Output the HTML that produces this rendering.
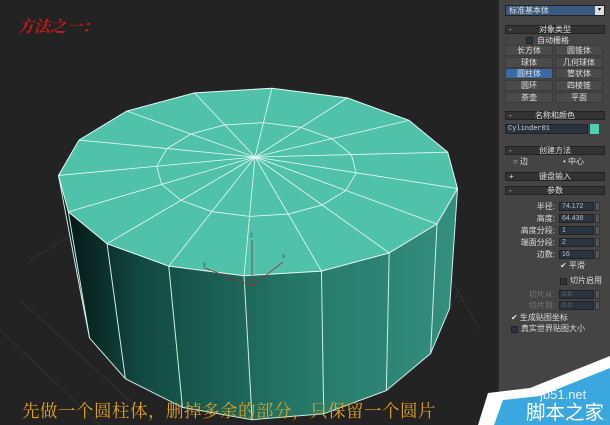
<!DOCTYPE html>
<html><head><meta charset="utf-8">
<style>
*{margin:0;padding:0;box-sizing:border-box}
body{width:610px;height:425px;overflow:hidden;background:#232323;position:relative;font-family:"Liberation Sans","Noto Sans CJK SC",sans-serif}
#vp{position:absolute;left:0;top:0}
.t{position:absolute;white-space:nowrap}
#panel{position:absolute;left:497px;top:0;width:113px;height:425px;background:#444;border-left:2px solid #2a2a2a}
.p{position:absolute;font-size:8px;color:#ddd;white-space:nowrap;line-height:10px}
.hd{position:absolute;left:6px;width:100px;height:9px;background:#333;border:1px solid #222;font-size:8px;color:#ddd;text-align:center;line-height:8px}
.hd i{position:absolute;left:3px;font-style:normal}
.b{position:absolute;height:11px;width:48px;background:#4a4a4a;border:1px solid #3a3a3a;font-size:8px;color:#ddd;text-align:center;line-height:9px}
.in{position:absolute;left:60px;width:35px;height:9px;background:#2a3440;border:1px solid #222;font-size:7px;color:#bbb;line-height:7px;padding-left:2px}
.sp{position:absolute;left:96px;width:5px;height:9px;background:#555;border:1px solid #333}
.lb{position:absolute;font-size:8px;color:#ddd;text-align:right;width:56px;left:0}
.cb{position:absolute;width:7px;height:7px;background:#2a3440;border:1px solid #222}
.wm{z-index:5}
</style></head><body>
<svg id="vp" width="497" height="425" viewBox="0 0 497 425">
<defs>
<linearGradient id="sg" x1="60" x2="460" y1="0" y2="0" gradientUnits="userSpaceOnUse">
<stop offset="0" stop-color="#031412"/><stop offset="0.2" stop-color="#124840"/><stop offset="0.6" stop-color="#257868"/><stop offset="1" stop-color="#35907f"/></linearGradient>
</defs>
<g stroke="#3a3a3a" stroke-width="0.7" fill="none">
<line x1="20" y1="300" x2="140" y2="410"/><line x1="0" y1="330" x2="100" y2="425"/>
<line x1="440" y1="260" x2="480" y2="330"/><line x1="460" y1="290" x2="420" y2="360"/>
<line x1="30" y1="260" x2="80" y2="230"/>
</g>
<g id="cyl"></g>
<g stroke="#8a3a3a" stroke-width="0.8" fill="none"><line x1="252" y1="286" x2="252" y2="240"/><line x1="252" y1="286" x2="205" y2="268"/><line x1="252" y1="286" x2="283" y2="262"/></g>
<text x="203" y="266" font-size="6" fill="#444">y</text><text x="282" y="258" font-size="6" fill="#444">x</text><text x="250" y="237" font-size="6" fill="#444">z</text>
</svg>
<script>
(function(){
var g=document.getElementById('cyl'),ns='http://www.w3.org/2000/svg';
var N=16,cx=258,cy=182,rx=200,ry=94,bcx=265,bcy=300,brx=185,bry=120,C=[255,157];
var T=[],B=[];
for(var k=0;k<N;k++){var a=(k*22.5+4)*Math.PI/180;T.push([cx+rx*Math.cos(a),cy+ry*Math.sin(a)]);B.push([bcx+brx*Math.cos(a),bcy+bry*Math.sin(a)]);}
function el(n,at){var e=document.createElementNS(ns,n);for(var k in at)e.setAttribute(k,at[k]);g.appendChild(e);return e;}
var front=[];for(var k=0;k<=8;k++)front.push(k);
var bp=[];for(var k=8;k>=0;k--)bp.push(B[k].join(','));
el('polygon',{points:front.map(function(k){return T[k].join(',')}).concat(bp).join(' '),fill:'url(#sg)'});
for(var k=0;k<=8;k++)el('line',{x1:T[k][0],y1:T[k][1],x2:B[k][0],y2:B[k][1],stroke:'#cfeee6','stroke-width':1});
var bl=[];for(var k=0;k<=8;k++)bl.push(B[k].join(','));
el('polyline',{points:bl.join(' '),fill:'none',stroke:'#cfeee6','stroke-width':1});
el('polygon',{points:T.map(function(p){return p.join(',')}).join(' '),fill:'#50c2aa',stroke:'#e6fbf5','stroke-width':1});
var inn=[];for(var k=0;k<N;k++){var p=T[k];inn.push([C[0]+(p[0]-C[0])*0.5,C[1]+(p[1]-C[1])*0.5].join(','));
el('line',{x1:C[0],y1:C[1],x2:p[0],y2:p[1],stroke:'#e6fbf5','stroke-width':0.8});}
el('polygon',{points:inn.join(' '),fill:'none',stroke:'#e6fbf5','stroke-width':0.8});
})();
</script>
<div class="t" style="left:18px;top:14px;font-size:16px;color:#c81818;font-family:'Liberation Serif','Noto Serif CJK SC',serif;font-weight:bold;font-style:italic">方法之一：</div>
<div class="t" style="left:22px;top:398px;font-size:17.5px;color:#e0a020;font-family:'Liberation Serif','Noto Serif CJK SC',serif;letter-spacing:0.5px">先做一个圆柱体，删掉多余的部分，只保留一个圆片</div>
<div id="panel">
<div style="position:absolute;left:6px;top:5px;width:100px;height:11px;background:#3a5a80;border:1px solid #222;font-size:8px;color:#ddd;line-height:9px;padding-left:3px">标准基本体<span style="position:absolute;right:0;top:0;width:9px;height:9px;background:#ddd;color:#000;font-size:6px;text-align:center">▾</span></div>
<div class="hd" style="top:25px"><i>-</i>对象类型</div>
<div class="cb" style="left:27px;top:37px"></div><div class="p" style="left:38px;top:36px">自动栅格</div>
<div class="b" style="left:6px;top:45px">长方体</div><div class="b" style="left:56px;top:45px">圆锥体</div>
<div class="b" style="left:6px;top:57px">球体</div><div class="b" style="left:56px;top:57px">几何球体</div>
<div class="b" style="left:6px;top:68px;background:#3a6aa0">圆柱体</div><div class="b" style="left:56px;top:68px">管状体</div>
<div class="b" style="left:6px;top:80px">圆环</div><div class="b" style="left:56px;top:80px">四棱锥</div>
<div class="b" style="left:6px;top:92px">茶壶</div><div class="b" style="left:56px;top:92px">平面</div>
<div class="hd" style="top:111px"><i>-</i>名称和颜色</div>
<div style="position:absolute;left:6px;top:124px;width:83px;height:10px;background:#2a3440;border:1px solid #222;font-size:7px;color:#ccc;line-height:8px;padding-left:2px;font-family:'Liberation Mono',monospace">Cylinder01</div>
<div style="position:absolute;left:91px;top:124px;width:9px;height:10px;background:#50d0b0"></div>
<div class="hd" style="top:146px"><i>-</i>创建方法</div>
<div class="p" style="left:14px;top:157px">○ 边</div><div class="p" style="left:64px;top:157px">• 中心</div>
<div class="hd" style="top:172px"><i>+</i>键盘输入</div>
<div class="hd" style="top:186px"><i>-</i>参数</div>
<div class="lb" style="top:201px">半径:</div><div class="in" style="top:202px">74.172</div><div class="sp" style="top:202px"></div>
<div class="lb" style="top:213px">高度:</div><div class="in" style="top:214px">64.438</div><div class="sp" style="top:214px"></div>
<div class="lb" style="top:225px">高度分段:</div><div class="in" style="top:226px">1</div><div class="sp" style="top:226px"></div>
<div class="lb" style="top:237px">端面分段:</div><div class="in" style="top:238px">2</div><div class="sp" style="top:238px"></div>
<div class="lb" style="top:249px">边数:</div><div class="in" style="top:250px">16</div><div class="sp" style="top:250px"></div>
<div class="p" style="left:61px;top:261px">✔ 平滑</div>
<div class="cb" style="left:61px;top:278px"></div><div class="p" style="left:71px;top:276px">切片启用</div>
<div class="lb" style="top:289px;color:#777">切片从:</div><div class="in" style="top:290px;color:#666">0.0</div><div class="sp" style="top:290px"></div>
<div class="lb" style="top:300px;color:#777">切片到:</div><div class="in" style="top:301px;color:#666">0.0</div><div class="sp" style="top:301px"></div>
<div class="p" style="left:12px;top:313px">✔ 生成贴图坐标</div>
<div class="cb" style="left:12px;top:326px"></div><div class="p" style="left:22px;top:324px">真实世界贴图大小</div>
</div>
<svg class="wm" style="position:absolute;left:470px;top:350px" width="140" height="75"><polygon points="8,75 18,43 60,38 140,6 140,75" fill="#fff"/><polygon points="24,75 33,50 70,46 140,18 140,75" fill="#3aa8de"/></svg>
<div class="t wm" style="left:540px;top:387px;font-size:13px;color:#eef">jb51.net</div>
<div class="t wm" style="left:526px;top:402px;font-size:19.5px;color:#fff;line-height:23px">脚本之家</div>
</body></html>
